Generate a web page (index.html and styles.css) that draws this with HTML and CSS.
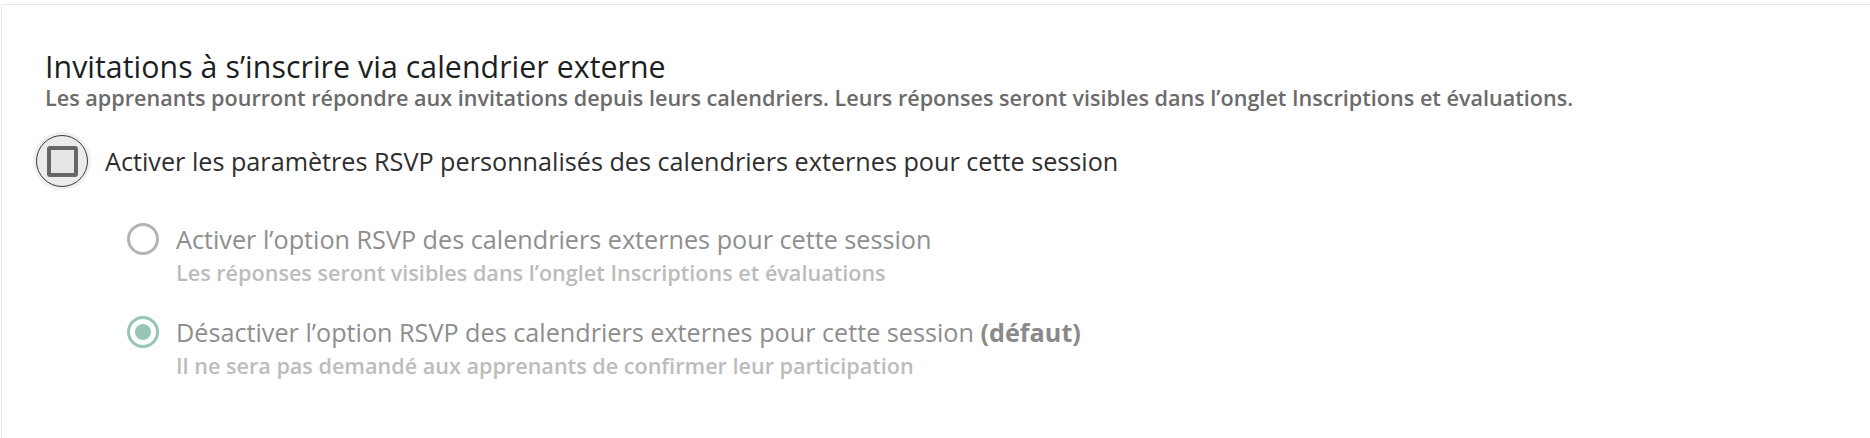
FILE: index.html
```html
<!DOCTYPE html>
<html lang="fr">
<head>
<meta charset="utf-8">
<title>RSVP</title>
<link rel="stylesheet" href="styles.css">
</head>
<body>
<section class="card">
  <h2 class="title">Invitations à s’inscrire via calendrier externe</h2>
  <p class="subtitle">Les apprenants pourront répondre aux invitations depuis leurs calendriers. Leurs réponses seront visibles dans l’onglet Inscriptions et évaluations.</p>

  <label class="check-row">
    <span class="halo"><span class="ring"><span class="box"></span></span></span>
    <span class="check-label">Activer les paramètres RSVP personnalisés des calendriers externes pour cette session</span>
  </label>

  <div class="options">
    <div class="option">
      <span class="radio-wrap"><span class="radio"></span></span>
      <span class="option-text">
        <span class="option-label">Activer l’option RSVP des calendriers externes pour cette session</span>
        <span class="option-desc">Les réponses seront visibles dans l’onglet Inscriptions et évaluations</span>
      </span>
    </div>
    <div class="option">
      <span class="radio-wrap"><span class="radio checked"><span class="dot"></span></span></span>
      <span class="option-text">
        <span class="option-label">Désactiver l’option RSVP des calendriers externes pour cette session <b>(défaut)</b></span>
        <span class="option-desc">Il ne sera pas demandé aux apprenants de confirmer leur participation</span>
      </span>
    </div>
  </div>
</section>
</body>
</html>
```
FILE: styles.css
```css
html, body {
  margin: 0;
  padding: 0;
  background: #ffffff;
}

body {
  font-family: "Open Sans", "Noto Sans", sans-serif;
  overflow: hidden;
}

.card {
  margin: 4px 0 0 1px;
  border-top: 1px solid #e6e6e6;
  border-left: 1px solid #ececec;
  padding: 44px 0 40px 43px;
  min-height: 440px;
  box-sizing: border-box;
}

.title {
  margin: 0;
  font-size: 30.3px;
  line-height: 36px;
  font-weight: 500;
  color: #1c1f22;
  letter-spacing: 0.05px;
}

.subtitle {
  margin: 0;
  font-size: 21.6px;
  line-height: 26px;
  font-weight: 600;
  color: #6b6b6b;
}

.check-row {
  display: flex;
  align-items: center;
  gap: 14px;
  margin: 21px 0 0 -12px;
}

.halo {
  width: 58px;
  height: 58px;
  border-radius: 50%;
  background: #efefef;
  display: flex;
  align-items: center;
  justify-content: center;
  flex: none;
}

.ring {
  width: 52px;
  height: 52px;
  border-radius: 50%;
  border: 1px solid #3a3a3a;
  box-sizing: border-box;
  background: #ebebeb;
  display: flex;
  align-items: center;
  justify-content: center;
}

.box {
  width: 31px;
  height: 31px;
  box-sizing: border-box;
  border: 4px solid #666666;
  border-radius: 3px;
  background: #e6e6e6;
}

.check-label {
  font-size: 25.2px;
  line-height: 32px;
  color: #2e2e2e;
}

.options {
  display: flex;
  flex-direction: column;
  gap: 30px;
  margin: 33px 0 0 82px;
}

.option {
  display: flex;
  gap: 17px;
  align-items: flex-start;
}

.radio-wrap {
  height: 32px;
  display: flex;
  align-items: center;
  flex: none;
}

.radio {
  width: 32px;
  height: 32px;
  box-sizing: border-box;
  border: 3px solid #b3b3b3;
  border-radius: 50%;
  display: flex;
  align-items: center;
  justify-content: center;
}

.radio.checked {
  border-color: #92c7b4;
}

.dot {
  width: 16px;
  height: 16px;
  border-radius: 50%;
  background: #98c6b5;
}

.option-text {
  display: flex;
  flex-direction: column;
  gap: 5px;
}

.option-label {
  font-size: 25.2px;
  line-height: 32px;
  color: #8e8e8e;
}

.option-label b {
  font-weight: 700;
  color: #8a8a8a;
}

.option-desc {
  font-size: 21.6px;
  line-height: 26px;
  font-weight: 600;
  color: #bcbcbc;
}
```
